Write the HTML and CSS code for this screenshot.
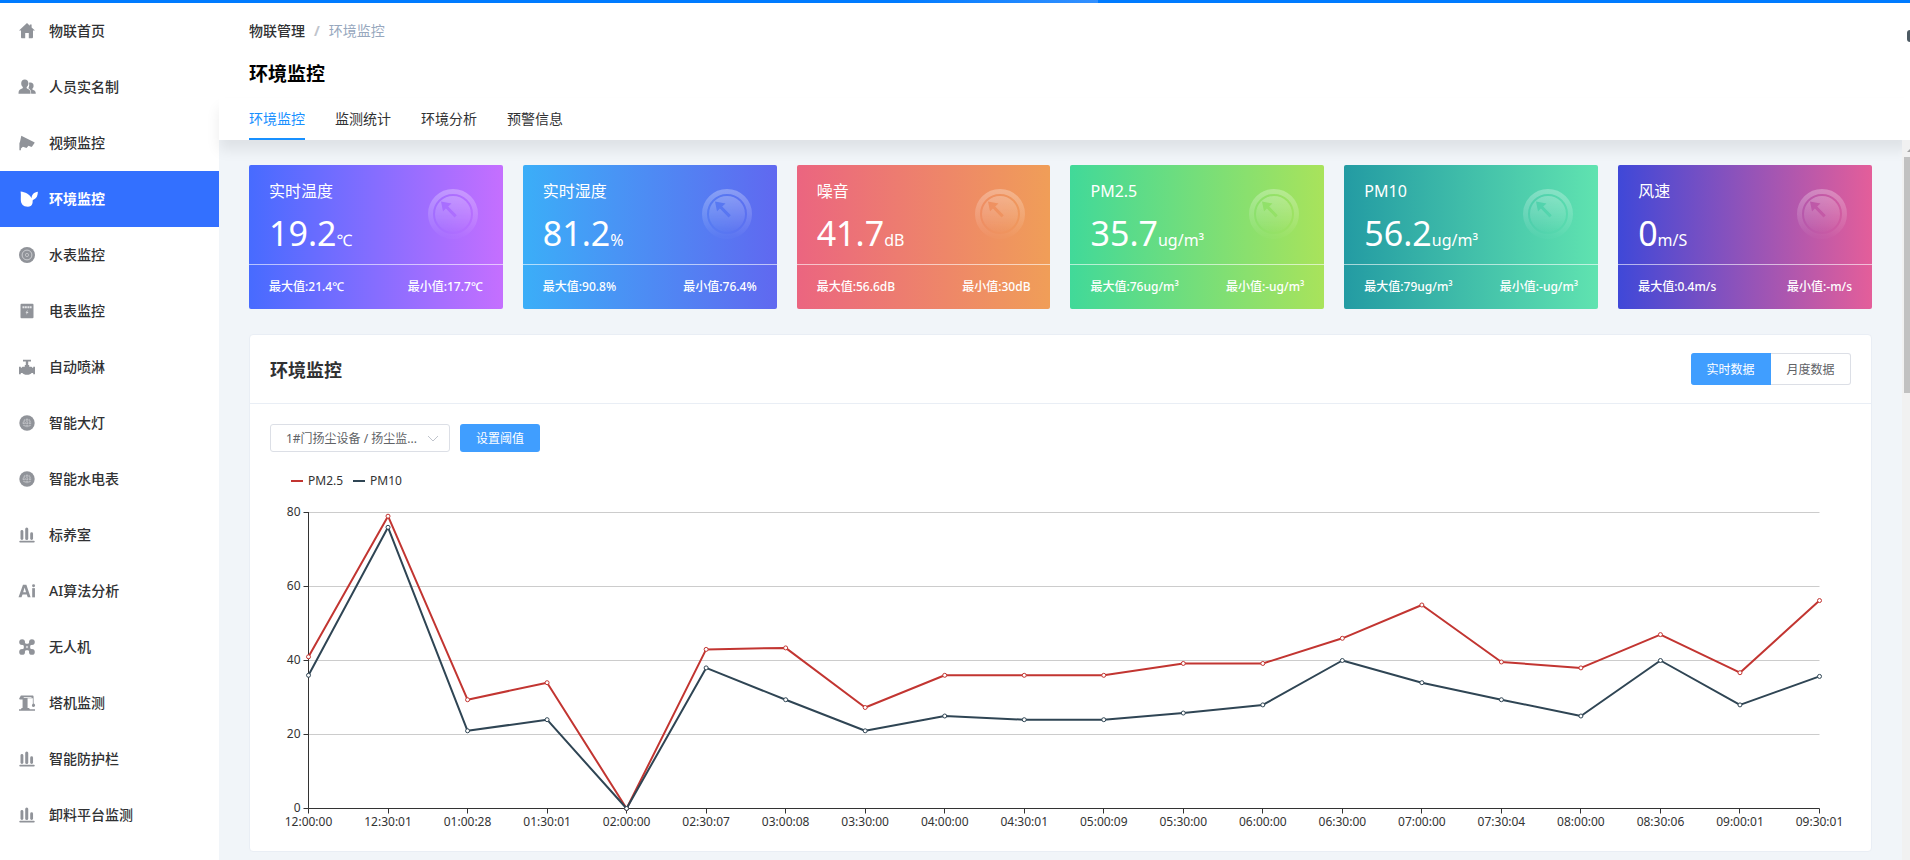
FILE: index.html
```html
<!DOCTYPE html>
<html lang="zh-CN">
<head>
<meta charset="utf-8">
<title>环境监控</title>
<link rel="stylesheet" href="styles.css">
</head>
<body>
<svg class="defs" aria-hidden="true">
  <defs>
    <linearGradient id="fade" x1="0" y1="0" x2="0" y2="1">
      <stop offset="0" stop-color="#fff" stop-opacity=".28"/>
      <stop offset="1" stop-color="#fff" stop-opacity=".02"/>
    </linearGradient>
    <mask id="arrow-cut">
      <rect width="50" height="50" fill="#fff"/>
      <path d="M13 12.500l10.500 2-3.300 3 8.600 8.700-2.200 2.200-8.700-9-2.900 3z" fill="#000"/>
    </mask>
  </defs>
  <symbol id="i-home" viewBox="0 0 16 16"><path d="M8 0L0 7.400h2V14c0 .9.400 1.300 1.200 1.300h3V10h3.600v5.300h3c.8 0 1.200-.4 1.200-1.300V7.400h2L12.600 4.400V1.500h-1.800v1.200z"/></symbol>
  <symbol id="i-people" viewBox="0 0 18 16"><path d="M6.800.5c2.200 0 3.600 1.500 3.600 3.800 0 1.600-.7 3-1.700 3.700-.3.900 0 1.500 1.200 1.900 2 .6 2.600 1.600 2.700 4.900H.5c0-3 .6-4.200 3-5 1.300-.4 1.600-1 1.300-1.800-1-.8-1.600-2.100-1.600-3.700C3.200 2 4.600.5 6.800.5z"/><path d="M11 3.800c2.800-.9 4.800.8 4.600 3.200 0 1.200-.5 2.200-1.300 2.800-.1.700.2 1 1 1.300 1.700.6 2.400 1.300 2.500 3.700h-4.600c-.2-3-.7-4.600-2.900-5.500 1-1.400 1.100-3.400.7-5.500z"/></symbol>
  <symbol id="i-camera" viewBox="0 0 16 16"><path d="M2.300.8l13 6.400c.4.200.4.500.2.800l-2.400 3.500c-.3.400-.7.500-1.200.3L9.500 10.800 7.500 13l-3.600-1.300-2 1.800V15.200H.4V8.200L1 6.800z"/></symbol>
  <symbol id="i-leaf" viewBox="0 0 18 16"><path d="M.6.500C5 1.200 9.800 3 11.500 7.200c.2-3.500 2.400-5.900 6.400-6.400-.2 3.900-1.200 6.600-4 7.600-.8.300-1.200.6-1.300 1.400.4 3.200-1.200 6-4.600 6C2.800 15.800.8 12.500.8 8.800.8 5.500 1 3 .6.500z"/></symbol>
  <symbol id="i-water" viewBox="0 0 16 16"><circle cx="8" cy="8" r="8"/><g fill="none" stroke="#d3d4d7" stroke-width=".9"><circle cx="8" cy="8" r="4.900"/><circle cx="8" cy="8" r="1.600" stroke-width=".7"/></g></symbol>
  <symbol id="i-meter" viewBox="0 0 14 16"><rect x=".5" y=".8" width="13" height="14.400" rx="1"/><path d="M2.500 3.200h2v2h-2zM5 3.200h1.800v2H5zM7.400 3.200h1.800v2H7.400zM9.700 3.200h1.900v2H9.700zM7.700 7L5.500 9.800h1.300L6 11.800l2.600-2.700H7.200z" fill="#e4e5e7"/></symbol>
  <symbol id="i-valve" viewBox="0 0 16 16"><path d="M4 .8h8v1.800H9.200V6h1v1.700h1.600c1 0 1.200.4 1.400 1h1V7.700H16v7.500h-1.800v-1.200h-1.600c-.8 1-2.300 1.800-4.600 1.800s-3.800-.8-4.600-1.800H1.800v1.200H0V7.700h1.800v1h1c.2-.6.4-1 1.400-1h1.600V6h1V2.600H4z"/></symbol>
  <symbol id="i-lamp" viewBox="0 0 16 16"><circle cx="8" cy="8" r="7.700"/><path d="M5 5h6v6H5zM3.500 8h9M8 3.500v9" fill="none" stroke="#d3d4d7" stroke-width=".9" stroke-dasharray="1.500 .7"/></symbol>
  <symbol id="i-bars" viewBox="0 0 18 18"><rect x="1.700" y="3.500" width="3.200" height="11" rx="1.600"/><rect x="7" y=".5" width="3.400" height="14" rx="1.700"/><rect x="12.600" y="6" width="3.200" height="8.500" rx="1.600"/><rect x=".3" y="15.400" width="17.400" height="2" rx="1"/></symbol>
  <symbol id="i-ai" viewBox="0 0 17 14"><path fill-rule="evenodd" d="M4.700 1h3.200l4 12H9.200l-.9-2.700h-4L3.300 13H.5zM6.200 3.600L4.900 8.100h2.700z"/><path d="M13.400 4.300H16V13h-2.600z"/><circle cx="14.700" cy="2" r="1.400"/></symbol>
  <symbol id="i-drone" viewBox="0 0 16 16"><circle cx="3.100" cy="3.100" r="2.900"/><circle cx="12.900" cy="3.100" r="2.900"/><circle cx="3.100" cy="12.900" r="2.900"/><circle cx="12.900" cy="12.900" r="2.900"/><path d="M2.600 4.800L4.800 2.600l2 2.200h2.400l2-2.200 2.200 2.200-2.200 2v2.400l2.200 2-2.200 2.200-2-2.200H6.800l-2 2.200-2.200-2.200 2.200-2V6.800z"/><circle cx="8" cy="8" r="1.200" fill="#d0d1d5"/></symbol>
  <symbol id="i-crane" viewBox="0 0 18 17"><path fill-rule="evenodd" d="M2.500.5h12.200c.8 0 1.300.5 1.300 1.300v7.300c1 .3 1.600 1 1.600 1.900 0 1-.8 1.700-1.700 1.700s-1.700-.7-1.700-1.600c0-.8.400-1.400 1-1.700V3.500H9.600v10.300h1.600l.8 1.400h5.500v1.500H.5v-1.500h2l.8-1.400h1V4.900H2c-.8 0-1.300-.4-1.300-1.200zM5.500 2v.8h8.300V2z"/></symbol>
  <symbol id="i-gauge" viewBox="0 0 50 50"><circle cx="25" cy="25" r="22.500" fill="none" stroke="url(#fade)" stroke-width="5"/><circle cx="25" cy="25" r="18" fill="url(#fade)" mask="url(#arrow-cut)"/></symbol>
</svg>

<div class="top-bar"></div>
<div class="app">
  <nav class="sidebar" aria-label="主菜单">
    <a class="menu-item" href="#"><svg class="menu-icon"><use href="#i-home"/></svg>物联首页</a>
    <a class="menu-item" href="#"><svg class="menu-icon"><use href="#i-people"/></svg>人员实名制</a>
    <a class="menu-item" href="#"><svg class="menu-icon"><use href="#i-camera"/></svg>视频监控</a>
    <a class="menu-item menu-item-active" href="#" aria-current="page"><svg class="menu-icon"><use href="#i-leaf"/></svg>环境监控</a>
    <a class="menu-item" href="#"><svg class="menu-icon"><use href="#i-water"/></svg>水表监控</a>
    <a class="menu-item" href="#"><svg class="menu-icon"><use href="#i-meter"/></svg>电表监控</a>
    <a class="menu-item" href="#"><svg class="menu-icon"><use href="#i-valve"/></svg>自动喷淋</a>
    <a class="menu-item" href="#"><svg class="menu-icon"><use href="#i-lamp"/></svg>智能大灯</a>
    <a class="menu-item" href="#"><svg class="menu-icon"><use href="#i-lamp"/></svg>智能水电表</a>
    <a class="menu-item" href="#"><svg class="menu-icon"><use href="#i-bars"/></svg>标养室</a>
    <a class="menu-item" href="#"><svg class="menu-icon"><use href="#i-ai"/></svg>AI算法分析</a>
    <a class="menu-item" href="#"><svg class="menu-icon"><use href="#i-drone"/></svg>无人机</a>
    <a class="menu-item" href="#"><svg class="menu-icon"><use href="#i-crane"/></svg>塔机监测</a>
    <a class="menu-item" href="#"><svg class="menu-icon"><use href="#i-bars"/></svg>智能防护栏</a>
    <a class="menu-item" href="#"><svg class="menu-icon"><use href="#i-bars"/></svg>卸料平台监测</a>
  </nav>

  <div class="main">
    <header class="page-header">
      <div class="breadcrumb"><a class="crumb" href="#">物联管理</a><span class="crumb-sep">/</span><span class="crumb-current">环境监控</span></div>
      <h1 class="page-title">环境监控</h1>
      <nav class="tabs" aria-label="页签">
        <a class="tab tab-active" href="#">环境监控</a>
        <a class="tab" href="#">监测统计</a>
        <a class="tab" href="#">环境分析</a>
        <a class="tab" href="#">预警信息</a>
      </nav>
    </header>

    <div class="scroll-row">
      <main class="content">
        <section class="cards">
          <article class="card card-temp">
            <div class="card-body"><div><h2 class="card-title">实时温度</h2><p class="card-value">19.2<span class="card-unit">℃</span></p></div><svg class="card-icon"><use href="#i-gauge"/></svg></div>
            <div class="card-foot"><span>最大值:21.4℃</span><span>最小值:17.7℃</span></div>
          </article>
          <article class="card card-humid">
            <div class="card-body"><div><h2 class="card-title">实时湿度</h2><p class="card-value">81.2<span class="card-unit">%</span></p></div><svg class="card-icon"><use href="#i-gauge"/></svg></div>
            <div class="card-foot"><span>最大值:90.8%</span><span>最小值:76.4%</span></div>
          </article>
          <article class="card card-noise">
            <div class="card-body"><div><h2 class="card-title">噪音</h2><p class="card-value">41.7<span class="card-unit">dB</span></p></div><svg class="card-icon"><use href="#i-gauge"/></svg></div>
            <div class="card-foot"><span>最大值:56.6dB</span><span>最小值:30dB</span></div>
          </article>
          <article class="card card-pm25">
            <div class="card-body"><div><h2 class="card-title">PM2.5</h2><p class="card-value">35.7<span class="card-unit">ug/m³</span></p></div><svg class="card-icon"><use href="#i-gauge"/></svg></div>
            <div class="card-foot"><span>最大值:76ug/m³</span><span>最小值:-ug/m³</span></div>
          </article>
          <article class="card card-pm10">
            <div class="card-body"><div><h2 class="card-title">PM10</h2><p class="card-value">56.2<span class="card-unit">ug/m³</span></p></div><svg class="card-icon"><use href="#i-gauge"/></svg></div>
            <div class="card-foot"><span>最大值:79ug/m³</span><span>最小值:-ug/m³</span></div>
          </article>
          <article class="card card-wind">
            <div class="card-body"><div><h2 class="card-title">风速</h2><p class="card-value">0<span class="card-unit">m/S</span></p></div><svg class="card-icon"><use href="#i-gauge"/></svg></div>
            <div class="card-foot"><span>最大值:0.4m/s</span><span>最小值:-m/s</span></div>
          </article>
        </section>

        <section class="panel">
          <div class="panel-head">
            <h2 class="panel-title">环境监控</h2>
            <div class="segment" role="group" aria-label="数据范围">
              <button class="segment-btn segment-btn-on" type="button" aria-pressed="true">实时数据</button>
              <button class="segment-btn" type="button" aria-pressed="false">月度数据</button>
            </div>
          </div>
          <div class="panel-body">
            <div class="controls">
              <div class="device">
                <select class="device-select" aria-label="设备"><option>1#门扬尘设备 / 扬尘监...</option></select>
                <svg class="device-arrow" viewBox="0 0 12 7"><path d="M1 1l5 5 5-5"/></svg>
              </div>
              <button class="primary-btn" type="button">设置阈值</button>
            </div>
            <ul class="legend">
              <li class="legend-item legend-red">PM2.5</li>
              <li class="legend-item legend-navy">PM10</li>
            </ul>
            <svg class="chart" id="chart" role="img" aria-label="PM2.5 与 PM10 折线图"></svg>
          </div>
        </section>
      </main>
      <div class="scrollbar" aria-hidden="true"><span class="scroll-up"></span><span class="scroll-thumb"></span></div>
    </div>
  </div>
</div>
<div class="edge-widget" aria-hidden="true"></div>
<script src="chart.js"></script>
</body>
</html>
```

FILE: styles.css
```css
* { box-sizing: border-box; }

body {
  margin: 0;
  min-height: 100vh;
  display: flex;
  flex-direction: column;
  overflow: hidden;
  background: #f1f5f9;
  color: #303133;
  font-family: "Noto Sans", "Noto Sans CJK SC", sans-serif;
  font-size: 14px;
}

h1, h2, p, ul { margin: 0; padding: 0; }
a { color: inherit; text-decoration: none; }
button, select { font-family: inherit; }

.defs { position: absolute; width: 0; height: 0; }

.top-bar {
  height: 3px;
  background: linear-gradient(90deg, #007bff 47%, #3390ff 57.5%, #007bff 57.5%);
}

.app { flex: 1; display: flex; }

.sidebar { width: 219px; flex: none; background: #fff; }

.menu-item {
  display: flex;
  align-items: center;
  gap: 13px;
  height: 56px;
  padding: 0 0 2px 18px;
  font-weight: 500;
}
.menu-icon { width: 18px; height: 16px; margin-top: 2px; fill: #909399; }
.menu-item-active { background: #3370ff; color: #fff; font-weight: 700; }
.menu-item-active .menu-icon { margin-left: 2px; margin-right: -2px; fill: #fff; }

.main { flex: 1; min-width: 0; display: flex; flex-direction: column; }

.page-header { background: #fff; }
.breadcrumb {
  display: flex;
  align-items: center;
  gap: 9px;
  height: 54px;
  padding: 0 30px;
}
.crumb { font-weight: 500; }
.crumb-sep { color: #c0c4cc; font-weight: 700; }
.crumb-current { color: #97a8be; }
.page-title {
  padding: 0 30px;
  margin: 3px 0 10px;
  line-height: 28px;
  font-size: 19px;
  font-weight: 700;
  color: #000;
}
.tabs {
  display: flex;
  gap: 30px;
  padding: 0 30px;
  background: #fff;
  box-shadow: 0 10px 14px rgba(0, 0, 0, .08);
}
.tab { height: 42px; line-height: 42px; }
.tab-active { color: #1890ff; box-shadow: inset 0 -2px #1890ff; }

.scroll-row { flex: 1; display: flex; }

.content { flex: 1; min-width: 0; padding: 25px 30px 8px; }

.cards { display: grid; grid-template-columns: repeat(6, 1fr); gap: 20px; }
.card { border-radius: 2px; color: #fff; }
.card-temp { background: linear-gradient(90deg, #476bff, #c56fff); }
.card-humid { background: linear-gradient(90deg, #3baef8, #6068f0); }
.card-noise { background: linear-gradient(90deg, #eb6580, #f09e58); }
.card-pm25 { background: linear-gradient(90deg, #41d999, #a9e35b); }
.card-pm10 { background: linear-gradient(90deg, #239ba3, #60e3b0); }
.card-wind { background: linear-gradient(90deg, #3f48d8, #e45e9a); }
.card-body {
  display: flex;
  justify-content: space-between;
  padding: 14px 25px 9px 20px;
  border-bottom: 1px solid rgba(255, 255, 255, .6);
}
.card-title { font-size: 16px; font-weight: 400; line-height: 24px; }
.card-value { margin-top: 8px; font-size: 34px; line-height: 44px; }
.card-unit { font-size: 16px; line-height: 16px; }
.card-icon { width: 50px; height: 50px; margin-top: 10px; }
.card-foot {
  display: flex;
  justify-content: space-between;
  padding: 0 20px;
  font-size: 12px;
  font-weight: 500;
  line-height: 44px;
}

.panel {
  margin-top: 25px;
  background: #fff;
  border: 1px solid #e9eef5;
  border-radius: 4px;
}
.panel-head {
  display: flex;
  align-items: center;
  justify-content: space-between;
  height: 69px;
  padding: 0 20px;
  border-bottom: 1px solid #e9eef5;
}
.panel-title { font-size: 18px; font-weight: 700; }
.segment { display: flex; }
.segment-btn {
  height: 32px;
  width: 80px;
  padding: 0;
  border: 1px solid #dcdfe6;
  border-left: 0;
  border-radius: 0 3px 3px 0;
  background: #fff;
  color: #606266;
  font-size: 12px;
}
.segment-btn-on {
  border-color: #409eff;
  border-radius: 3px 0 0 3px;
  background: #409eff;
  color: #fff;
}
.panel-body { padding: 20px; }
.controls { display: flex; gap: 10px; }
.device { position: relative; width: 180px; }
.device-select {
  width: 100%;
  height: 28px;
  padding: 0 0 0 15px;
  appearance: none;
  border: 1px solid #dcdfe6;
  border-radius: 3px;
  background: #fff;
  color: #606266;
  font-size: 12px;
}
.device-arrow {
  position: absolute;
  top: 11px;
  right: 11px;
  width: 12px;
  height: 7px;
  fill: none;
  stroke: #c0c4cc;
  pointer-events: none;
}
.primary-btn {
  width: 80px;
  height: 28px;
  padding: 0;
  border: 0;
  border-radius: 3px;
  background: #409eff;
  color: #fff;
  font-size: 12px;
}

.legend {
  display: flex;
  gap: 10px;
  margin-top: 21px;
  padding-left: 21px;
  list-style: none;
  font-size: 12px;
  line-height: 16px;
  color: #333;
}
.legend-item { display: flex; align-items: center; gap: 5px; }
.legend-item::before { content: ""; width: 12px; height: 2px; }
.legend-red::before { background: #c23531; }
.legend-navy::before { background: #2f4554; }

.chart { display: block; width: 100%; height: 342px; font-size: 12px; }
.chart text { fill: #333; }
.grid-line { fill: none; stroke: #ccc; }
.axis-line { fill: none; stroke: #333; }
.series { fill: none; stroke-width: 2; stroke-linejoin: bevel; }
.dot { fill: #fff; stroke-width: 1; }
.red { stroke: #c23531; }
.navy { stroke: #2f4554; }
.x-label { text-anchor: middle; }
.y-label { text-anchor: end; }

.scrollbar {
  display: flex;
  flex-direction: column;
  width: 8px;
  padding-left: 2px;
  background: #f1f1f1;
  overflow: hidden;
}
.scroll-up {
  width: 10px;
  height: 5px;
  margin: 7px 0 5px 3px;
  background: #a3a3a3;
  clip-path: polygon(50% 0, 100% 100%, 0 100%);
}
.scroll-thumb { height: 236px; background: #c1c1c1; }

.edge-widget {
  position: absolute;
  top: 30px;
  right: 0;
  width: 3px;
  height: 12px;
  border-radius: 6px 0 0 6px;
  background: #4d5a63;
}
```

FILE: chart.js
```javascript
const times = ["12:00:00", "12:30:01", "01:00:28", "01:30:01", "02:00:00", "02:30:07", "03:00:08",
  "03:30:00", "04:00:00", "04:30:01", "05:00:09", "05:30:00", "06:00:00", "06:30:00", "07:00:00",
  "07:30:04", "08:00:00", "08:30:06", "09:00:01", "09:30:01"];
const series = [
  { cls: "red", values: [41, 79, 29.4, 34, 0, 43, 43.4, 27.3, 36, 36, 36, 39.2, 39.2, 46, 55, 39.6, 38, 47, 36.7, 56.2] },
  { cls: "navy", values: [36, 76, 21, 24, 0, 38, 29.4, 21, 25, 24, 24, 25.8, 28, 40, 34, 29.4, 25, 40, 28, 35.7] }
];

const chart = document.getElementById("chart");
const top80 = 23.5;
const base = 319.5;
const left = 38.5;

function draw() {
  const right = Math.round(chart.clientWidth) - 32 + 0.5;
  const x = i => left + (right - left) * i / (times.length - 1);
  const y = v => base - (base - top80) * v / 80;
  let out = "";
  for (const v of [80, 60, 40, 20, 0]) {
    if (v) out += `<path class="grid-line" d="M${left} ${y(v)}H${right}"/>`;
    out += `<path class="axis-line" d="M${left - 5} ${y(v)}H${left}"/>`;
    out += `<text class="y-label" x="${left - 8}" y="${y(v) + 3}">${v}</text>`;
  }
  out += `<path class="axis-line" d="M${left} ${top80 - 0.5}V${base}H${right}"/>`;
  times.forEach((t, i) => {
    const px = Math.floor(x(i)) + 0.5;
    out += `<path class="axis-line" d="M${px} ${base}v5"/>`;
    out += `<text class="x-label" x="${x(i)}" y="${base + 17}">${t}</text>`;
  });
  for (const s of series) {
    const pts = s.values.map((v, i) => `${x(i)},${y(v)}`).join(" ");
    out += `<polyline class="series ${s.cls}" points="${pts}"/>`;
    s.values.forEach((v, i) => {
      out += `<circle class="dot ${s.cls}" cx="${x(i)}" cy="${y(v)}" r="2"/>`;
    });
  }
  chart.innerHTML = out;
}

draw();
window.addEventListener("resize", draw);
```
